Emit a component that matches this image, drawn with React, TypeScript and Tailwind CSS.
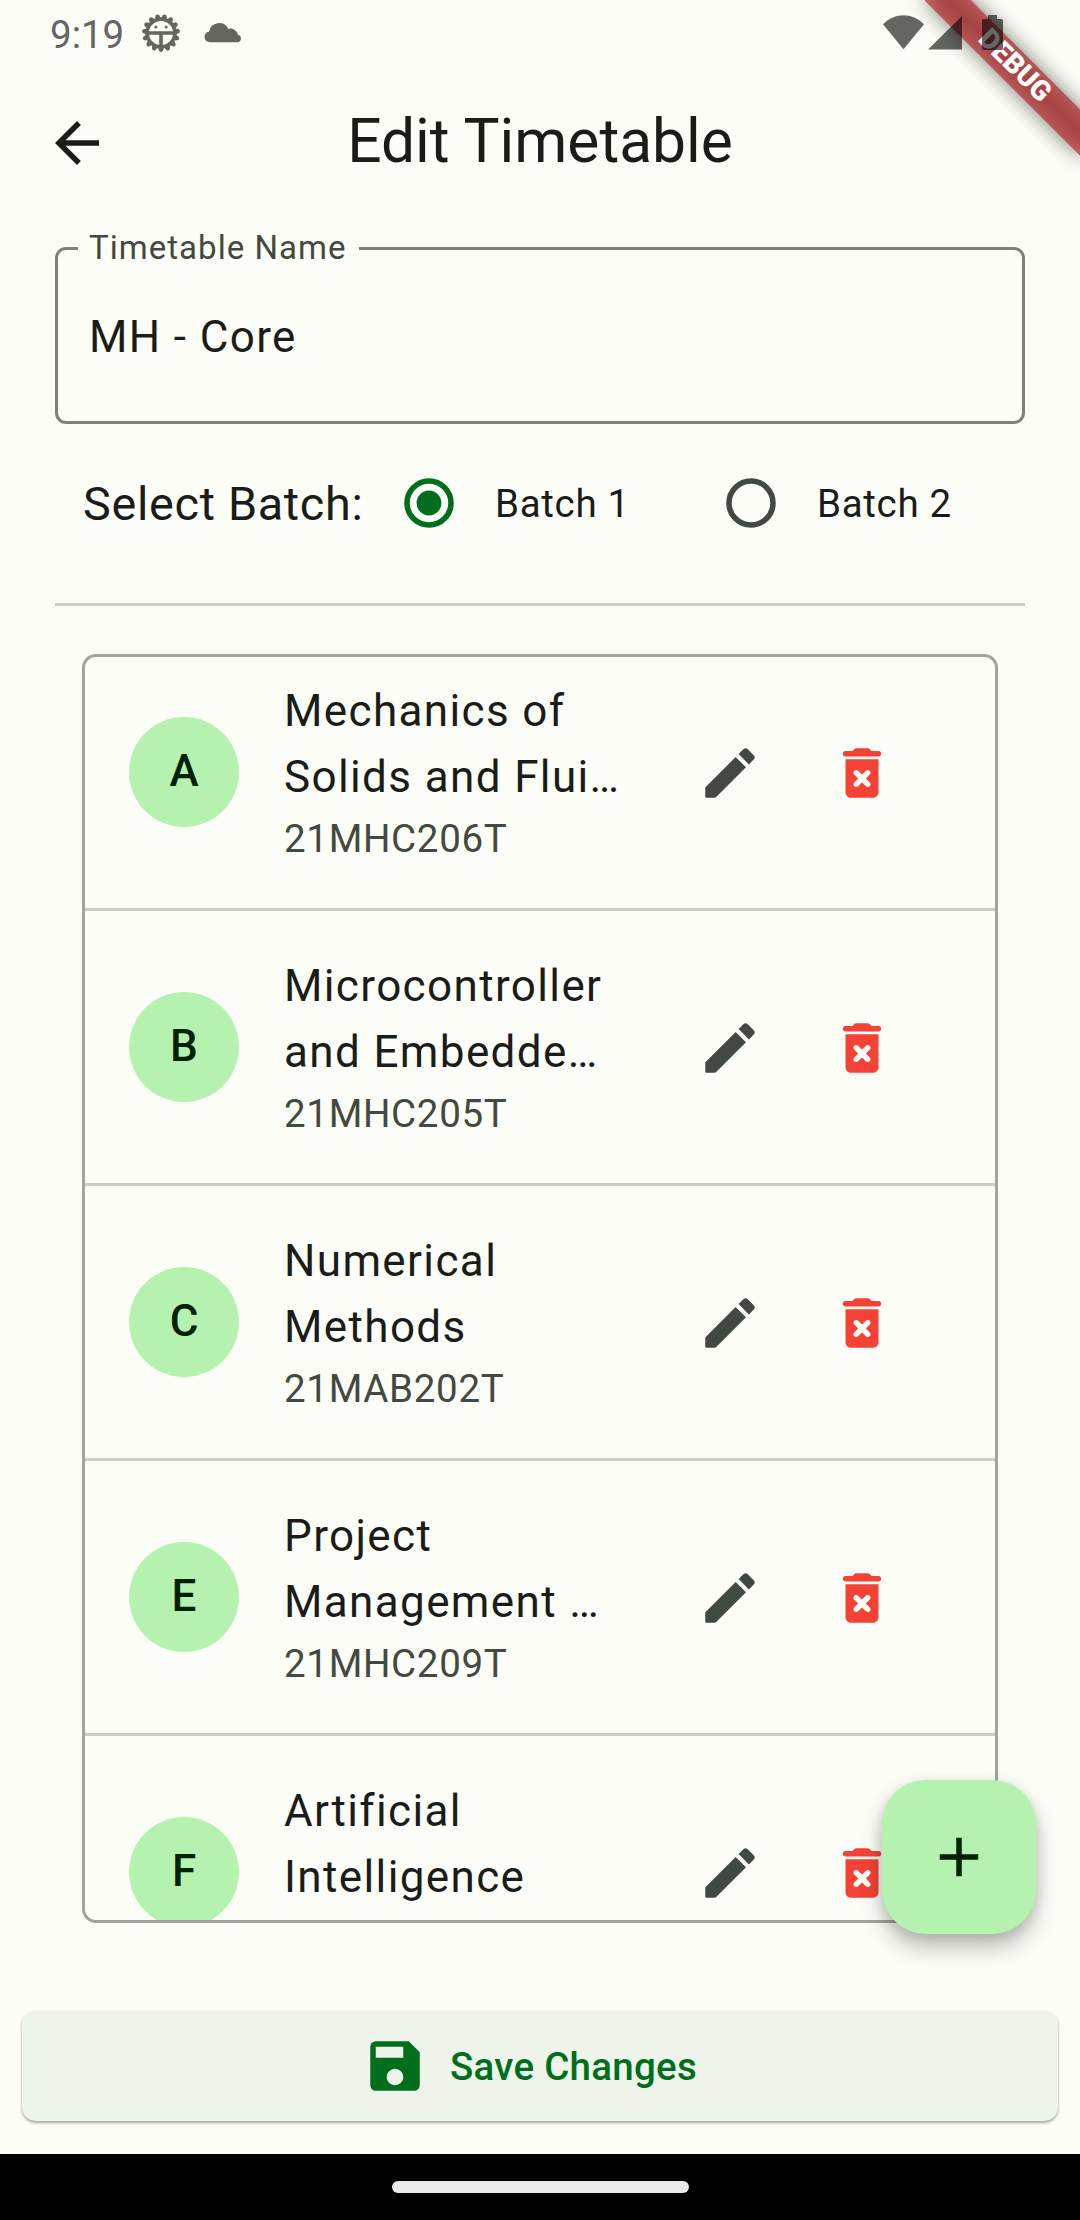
import React from "react";
import { MdSave } from "react-icons/md";

type Course = { slot: string; lines: [string, string]; code?: string };

const courses: Course[] = [
  { slot: "A", lines: ["Mechanics of", "Solids and Flui…"], code: "21MHC206T" },
  { slot: "B", lines: ["Microcontroller", "and Embedde…"], code: "21MHC205T" },
  { slot: "C", lines: ["Numerical", "Methods"], code: "21MAB202T" },
  { slot: "E", lines: ["Project", "Management …"], code: "21MHC209T" },
  { slot: "F", lines: ["Artificial", "Intelligence"] },
];

function GearIcon() {
  const teeth = Array.from({ length: 15 }, (_, i) => i * 24);
  return (
    <svg width="40" height="40" viewBox="-20 -20 40 40" className="block">
      {teeth.map((a) => (
        <path key={a} d="M-3 14.5 L-1.9 18 Q0 20 1.9 18 L3 14.5Z" transform={`rotate(${a})`} fill="#656562" />
      ))}
      <circle r="13.9" fill="none" stroke="#656562" strokeWidth="3.6" />
      <path d="M-13-1.7H13V1.7H1.8V13H-1.8V1.7H-13Z" fill="#656562" />
      <circle cx="-5.1" cy="-6" r="1.5" fill="#656562" />
      <circle cx="5.1" cy="-6" r="1.5" fill="#656562" />
    </svg>
  );
}

function CloudIcon() {
  return (
    <svg width="38" height="22" viewBox="0 0 38 22" className="block" fill="#656562">
      <path d="M5.3 21.2A5.3 5.3 0 0 1 5 10.7A10.2 10.2 0 0 1 24.3 7.9A7.6 7.6 0 0 1 33.9 13.7A3.8 3.8 0 0 1 33.6 21.2Z" />
    </svg>
  );
}

function StatusBar() {
  return (
    <div className="relative z-20 flex h-[66px] items-start">
      <span className="ml-[50px] mt-[15px] w-[91px] text-[38.5px] leading-[40px] text-[#656562]">9:19</span>
      <div className="mt-[13px]">
        <GearIcon />
      </div>
      <div className="ml-[23px] mt-[21px]">
        <CloudIcon />
      </div>
      <svg width="124" height="40" viewBox="0 0 124 40" className="ml-auto mr-[75px] mt-[12px] block" fill="#000" fillOpacity="0.6">
        <path d="M2 12.3C14 .2 31 .2 43 12.3L22.5 37.3Z" />
        <path d="M47 37.6 81 4V37.6Z" />
        <path d="M107 3h9v4h4.2a1.8 1.8 0 0 1 1.8 1.8v27.4a1.8 1.8 0 0 1-1.8 1.8h-17.4a1.8 1.8 0 0 1-1.8-1.8V8.8a1.8 1.8 0 0 1 1.8-1.8h4.2z" />
      </svg>
    </div>
  );
}

function DebugBanner() {
  return (
    <div className="absolute left-[904px] top-[49.5px] z-10 h-[33px] w-[220px] rotate-45">
      <div className="absolute inset-0 bg-black/50 blur-[10.9px]" />
      <div className="absolute inset-0 bg-[#b71c1c]/63" />
      <div className="relative text-center text-[28px] font-black leading-[30px] text-white">DEBUG</div>
    </div>
  );
}

function Radio({ selected = false }: { selected?: boolean }) {
  return (
    <div className="flex w-[132px] shrink-0 justify-center">
      <svg width="50" height="50" viewBox="-25 -25 50 50" className={selected ? "text-[#006e1c]" : "text-[#424940]"}>
        <circle r="22" fill="none" stroke="currentColor" strokeWidth="5.5" />
        {selected && <circle r="12.4" fill="currentColor" />}
      </svg>
    </div>
  );
}

function EditIcon() {
  return (
    <svg width="66" height="66" viewBox="0 0 24 24" fill="#424940">
      <path d="M3 17.46v3.04c0 .28.22.5.5.5h3.04c.13 0 .26-.05.35-.15L17.81 9.94l-3.75-3.75L3.15 17.1c-.1.1-.15.22-.15.36zM20.71 7.04c.39-.39.39-1.02 0-1.41l-2.34-2.34c-.39-.39-1.02-.39-1.41 0l-1.83 1.83 3.75 3.75 1.83-1.83z" />
    </svg>
  );
}

function DeleteIcon() {
  return (
    <svg width="66" height="66" viewBox="0 0 24 24" fill="#f44336" fillRule="evenodd">
      <path d="M6 19c0 1.1.9 2 2 2h8c1.1 0 2-.9 2-2V7H6v12zm3.17-6.41c-.39-.39-.39-1.02 0-1.41.39-.39 1.02-.39 1.41 0L12 12.59l1.41-1.41c.39-.39 1.02-.39 1.41 0 .39.39.39 1.02 0 1.41L13.41 14l1.41 1.41c.39.39.39 1.02 0 1.41-.39.39-1.02.39-1.41 0L12 15.41l-1.41 1.41c-.39.39-1.02.39-1.41 0-.39-.39-.39-1.02 0-1.41L10.59 14z" />
      <path d="M18 4h-2.5l-.71-.71c-.18-.18-.44-.29-.7-.29H9.91c-.26 0-.52.11-.7.29L8.5 4H6c-.55 0-1 .45-1 1s.45 1 1 1h12c.55 0 1-.45 1-1s-.45-1-1-1z" />
    </svg>
  );
}

function CourseRow({ slot, lines, code }: Course) {
  return (
    <div className="flex h-[275px] items-center border-b-[3px] border-[#c7cec3] pl-[44px]">
      <div className="flex size-[110px] shrink-0 items-center justify-center rounded-full bg-[#b6f2af] pb-[3px] text-[44px] font-medium text-[#002204]">
        {slot}
      </div>
      <div className="ml-[45px] w-[336px] shrink-0">
        <div className="-mt-px mb-px whitespace-nowrap text-[44px] leading-[66px] tracking-[1.375px] text-[#1a1c19]">
          {lines[0]}
          <br />
          {lines[1]}
        </div>
        <div className="h-[55px] text-[38.5px] leading-[55px] tracking-[0.69px] text-[#424940]">{code}</div>
      </div>
      <div className="ml-[44px] flex w-[132px] shrink-0 justify-center pt-[2px]">
        <EditIcon />
      </div>
      <div className="flex w-[132px] shrink-0 justify-center pt-[2px]">
        <DeleteIcon />
      </div>
    </div>
  );
}

export default function App() {
  return (
    <div className="relative flex h-[2220px] w-[1080px] flex-col overflow-hidden bg-[#fcfdf6] font-['Roboto',sans-serif] text-[#1a1c19]">
      <StatusBar />
      <DebugBanner />

      <header className="flex h-[154px] items-center px-[44px]">
        <svg width="66" height="66" viewBox="0 0 24 24" fill="#1a1c19">
          <path d="M20 11H7.83l5.59-5.59L12 4l-8 8 8 8 1.41-1.41L7.83 13H20v-2z" />
        </svg>
        <h1 className="-mt-[3px] flex-1 pr-[66px] text-center text-[60.5px] leading-[77px]">Edit Timetable</h1>
      </header>

      <main className="flex flex-col px-[55px]">
        <div className="relative mt-[27px] flex h-[177px] items-center rounded-[11px] border-[3px] border-[#7b8279] pl-[31px]">
          <span className="absolute left-[20px] top-[-24px] bg-[#fcfdf6] pl-[11px] pr-[12px] text-[33px] leading-[44px] tracking-[1.03px] text-[#424940]">
            Timetable Name
          </span>
          <span className="pt-[2px] text-[44px] leading-[66px] tracking-[1.375px]">MH - Core</span>
        </div>

        <div className="flex h-[158px] items-center pl-[28px]">
          <span className="w-[280px] whitespace-nowrap pt-[2px] text-[46.75px] tracking-[0.69px]">Select Batch:</span>
          <Radio selected />
          <span className="w-[190px] pt-[2px] text-[38.5px] tracking-[0.69px]">Batch 1</span>
          <Radio />
          <span className="pt-[2px] text-[38.5px] tracking-[0.69px]">Batch 2</span>
        </div>

        <div className="mt-[21px] h-[3px] bg-[#c7cec3]" />

        <div className="mx-[27px] mt-[48px] h-[1269px] overflow-hidden rounded-[14px] border-[3px] border-[#a3a3a2]">
          <div className="-mt-[21px]">
            {courses.map((c) => (
              <CourseRow key={c.slot} {...c} />
            ))}
          </div>
        </div>
      </main>

      <button className="mx-[22px] mt-[88px] flex h-[110px] items-center justify-center rounded-[14px] bg-[#eff4ea] pr-[21px] text-[#006e1c] shadow-[0_2px_3px_rgba(0,0,0,0.28),0_1px_3px_rgba(0,0,0,0.12)]">
        <MdSave size={66} className="mr-[22px]" />
        <span className="pt-[2px] text-[38.5px] font-medium tracking-[0.275px]">Save Changes</span>
      </button>

      <div className="absolute left-[882px] top-[1780px] flex size-[154px] items-center justify-center rounded-[44px] bg-[#b6f2af] shadow-[0_14px_22px_rgba(0,0,0,0.24),0_3px_14px_rgba(0,0,0,0.12)]">
        <svg width="66" height="66" viewBox="0 0 24 24" fill="#002204">
          <path d="M19 13h-6v6h-2v-6H5v-2h6V5h2v6h6v2z" />
        </svg>
      </div>

      <div className="mt-auto flex h-[66px] justify-center bg-black pt-[27px]">
        <div className="h-[12px] w-[297px] rounded-full bg-[#ebebeb]" />
      </div>
    </div>
  );
}
